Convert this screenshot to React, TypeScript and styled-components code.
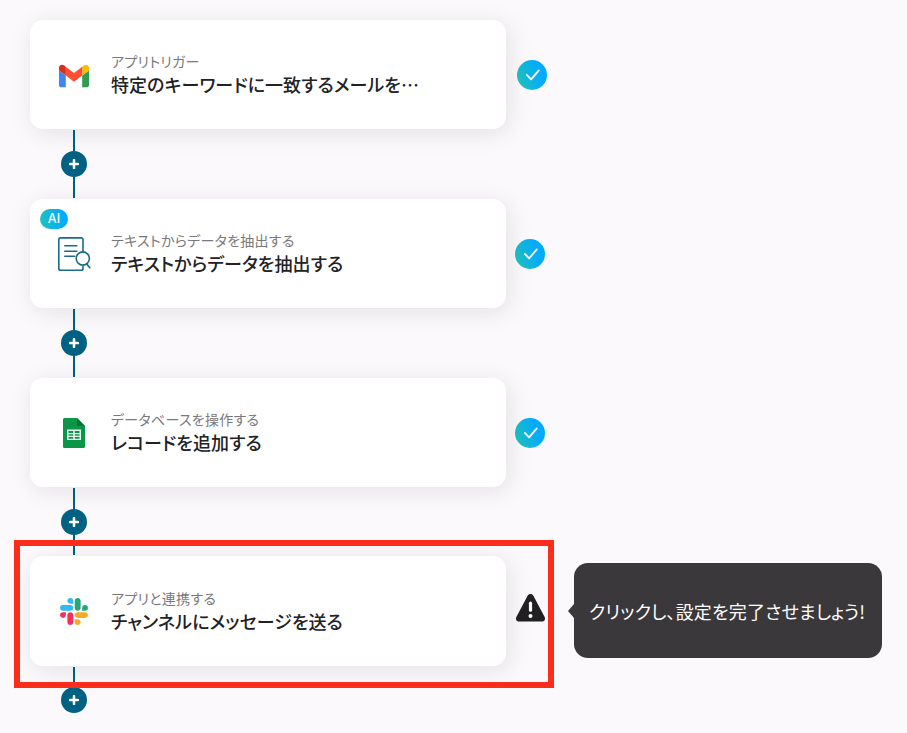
import React, { FC, ReactNode } from 'react';
import styled, { createGlobalStyle } from 'styled-components';

type Status = 'done' | 'warning';

interface FlowStep {
  id: string;
  icon: ReactNode;
  label: string;
  title: string;
  status: Status;
  statusGap: number;
  cardHeight: number;
  connectorHeight: number;
  isAi?: boolean;
  isHighlighted?: boolean;
  hint?: string;
}

const GmailIcon: FC = () => (
  <svg width="30" height="25" viewBox="52 37 88 73.300">
    <path fill="#4285f4" d="M58 108h14V74L52 59v43c0 3.320 2.690 6 6 6" />
    <path fill="#2f9a50" d="M120 108h14c3.320 0 6-2.690 6-6V59l-20 15" />
    <path fill="#fbbc04" d="M120 48v26l20-15v-8c0-7.420-8.470-11.650-14.400-7.200" />
    <path fill="#ff5035" d="M72 74V48l24 18 24-18v26L96 92" />
    <path fill="#d5301f" d="M52 51v8l20 15V48l-5.600-4.200c-5.940-4.450-14.400-.220-14.400 7.200" />
  </svg>
);

const DocumentSearchIcon: FC = () => (
  <svg
    width="34"
    height="36"
    viewBox="-.8 -.5 34 36"
    fill="none"
    stroke="#1b6c88"
    strokeWidth="1.600"
    strokeLinecap="round"
  >
    <path d="M25.200 15.500V3.200a1.800 1.800 0 0 0-1.800-1.800H2.800A1.800 1.800 0 0 0 1 3.200v28.800a1.800 1.800 0 0 0 1.800 1.800h20.600a1.800 1.800 0 0 0 1.800-1.800v-2" />
    <path d="M7 9.300h12M7 14.700h12M7 19.700h10" />
    <circle cx="25" cy="22" r="6.600" />
    <path d="M29 27.500l3 3.800" />
  </svg>
);

const SheetsIcon: FC = () => (
  <svg width="22" height="30" viewBox="0 0 22 30">
    <path fill="#0a9648" d="M1.500 0H14l8 8v20.500a1.500 1.500 0 0 1-1.500 1.500h-19A1.500 1.500 0 0 1 0 28.500v-27A1.500 1.500 0 0 1 1.500 0z" />
    <path fill="#087431" d="M14 0l8 8h-6.500A1.500 1.500 0 0 1 14 6.500z" />
    <path
      fill="#e6f5ec"
      fillRule="evenodd"
      d="M4 11.500h14v10.500H4zM5.500 13v2h4.700V13zm6.300 0v2h4.700V13zM5.500 16.200v1.500h4.700v-1.500zm6.300 0v1.500h4.700v-1.500zM5.500 18.900v1.800h4.700v-1.800zm6.300 0v1.800h4.700v-1.800z"
    />
  </svg>
);

const SlackIcon: FC = () => (
  <svg width="28" height="27" viewBox="0 0 122.800 122.800" preserveAspectRatio="none">
    <path
      fill="#f5305f"
      d="M25.800 77.600c0 7.100-5.800 12.900-12.900 12.900S0 84.700 0 77.600s5.800-12.900 12.900-12.900h12.900v12.900zM32.300 77.600c0-7.100 5.800-12.900 12.900-12.900s12.900 5.800 12.900 12.900v32.300c0 7.100-5.800 12.900-12.900 12.900s-12.900-5.800-12.900-12.900V77.600z"
    />
    <path
      fill="#31b9f5"
      d="M45.200 25.800c-7.100 0-12.900-5.800-12.900-12.900S38.100 0 45.200 0s12.900 5.800 12.900 12.900v12.900H45.200zM45.200 32.300c7.100 0 12.900 5.800 12.900 12.900s-5.800 12.900-12.900 12.900H12.900C5.800 58.100 0 52.300 0 45.200s5.800-12.900 12.900-12.900h32.300z"
    />
    <path
      fill="#25a77b"
      d="M97 45.200c0-7.100 5.800-12.900 12.900-12.900s12.900 5.800 12.900 12.900-5.800 12.900-12.900 12.900H97V45.200zM90.500 45.200c0 7.100-5.800 12.900-12.900 12.900s-12.900-5.800-12.900-12.900V12.900C64.700 5.800 70.500 0 77.600 0s12.900 5.800 12.900 12.900v32.300z"
    />
    <path
      fill="#f3ab23"
      d="M77.600 97c7.100 0 12.900 5.800 12.900 12.900s-5.800 12.900-12.900 12.900-12.900-5.800-12.900-12.900V97h12.900zM77.600 90.500c-7.100 0-12.900-5.800-12.900-12.900s5.800-12.900 12.900-12.900h32.300c7.100 0 12.900 5.800 12.900 12.900s-5.800 12.900-12.900 12.900H77.600z"
    />
  </svg>
);

const CheckIcon: FC = () => (
  <svg width="30" height="30" viewBox="0 0 30 30" fill="none">
    <path
      d="M9.800 14.900l4.300 4.500 7.700-9"
      stroke="#fff"
      strokeWidth="1.800"
      strokeLinecap="round"
      strokeLinejoin="round"
    />
  </svg>
);

const WarningIcon: FC = () => (
  <svg width="30" height="28" viewBox="-.5 1.300 30 28" overflow="visible">
    <path
      fill="#212023"
      d="M12.100 2c1.300-2.200 4.500-2.200 5.800 0l11.100 21c1.300 2.300.1 4.800-2.400 4.800H3.400C.9 27.800-.3 25.300 1 23z"
    />
    <path d="M15 9.500v7" stroke="#fff" strokeWidth="3.200" strokeLinecap="round" />
    <circle cx="15" cy="22.300" r="2" fill="#fff" />
  </svg>
);

const PlusIcon: FC = () => (
  <svg width="10" height="10" viewBox="0 0 10 10">
    <path d="M5 1.100v7.800M1.100 5h7.800" stroke="#fff" strokeWidth="2.500" strokeLinecap="round" />
  </svg>
);

const steps: FlowStep[] = [
  {
    id: 'gmail',
    icon: <GmailIcon />,
    label: 'アプリトリガー',
    title: '特定のキーワードに一致するメールを…',
    status: 'done',
    statusGap: 11,
    cardHeight: 109,
    connectorHeight: 70
  },
  {
    id: 'extract',
    icon: <DocumentSearchIcon />,
    label: 'テキストからデータを抽出する',
    title: 'テキストからデータを抽出する',
    status: 'done',
    statusGap: 9,
    cardHeight: 109,
    connectorHeight: 70,
    isAi: true
  },
  {
    id: 'sheets',
    icon: <SheetsIcon />,
    label: 'データベースを操作する',
    title: 'レコードを追加する',
    status: 'done',
    statusGap: 9,
    cardHeight: 109,
    connectorHeight: 69
  },
  {
    id: 'slack',
    icon: <SlackIcon />,
    label: 'アプリと連携する',
    title: 'チャンネルにメッセージを送る',
    status: 'warning',
    statusGap: 9,
    cardHeight: 110,
    connectorHeight: 68,
    isHighlighted: true,
    hint: 'クリックし、設定を完了させましょう!'
  }
];

const App: FC = () => (
  <>
    <GlobalStyle />
    <Flow>
      {steps.map((step, index) => (
        <React.Fragment key={step.id}>
          <StepRow>
            <Card height={step.cardHeight}>
              {step.isAi && <AiBadge>AI</AiBadge>}
              <IconBox>{step.icon}</IconBox>
              <Texts>
                <Label>{step.label}</Label>
                <Title>{step.title}</Title>
              </Texts>
            </Card>
            <StatusMark status={step.status} gap={step.statusGap}>
              {step.status === 'done' ? <CheckIcon /> : <WarningIcon />}
            </StatusMark>
            {step.hint && <Hint>{step.hint}</Hint>}
            {step.isHighlighted && <Highlight />}
          </StepRow>
          <Connector height={step.connectorHeight}>
            <Line />
            <AddButton aria-label="追加">
              <PlusIcon />
            </AddButton>
            <Line isHidden={index === steps.length - 1} />
          </Connector>
        </React.Fragment>
      ))}
    </Flow>
  </>
);

export default App;

const GlobalStyle = createGlobalStyle`
  * {
    box-sizing: border-box;
  }

  body {
    margin: 0;
    overflow: hidden;
    background: #fbf9fc;
    font-family: 'Noto Sans CJK JP', sans-serif;
    font-feature-settings: 'palt';
  }
`;

const Flow = styled('main')`
  display: flex;
  flex-direction: column;
  width: 907px;
  height: 733px;
  padding: 20px 0 0 30px;
`;

const StepRow = styled('section')`
  position: relative;
  display: flex;
  flex-shrink: 0;
  align-items: center;
`;

const Card = styled('div').withConfig({
  shouldForwardProp: prop => prop !== 'height'
})<{ height: number }>`
  position: relative;
  display: flex;
  align-items: center;
  width: 476px;
  height: ${({ height }) => height}px;
  border-radius: 13px;
  background: #fff;
  box-shadow: 3px 4px 24px rgba(30, 20, 30, 0.1);
`;

const AiBadge = styled('span')`
  position: absolute;
  top: 10px;
  left: 10px;
  width: 28px;
  height: 20px;
  border-radius: 10px;
  background: linear-gradient(80deg, #1fc3bd, #04abfa 80%);
  color: #fff;
  font: 500 12.5px/20px Inter, sans-serif;
  letter-spacing: 0.2px;
  text-align: center;
`;

const IconBox = styled('div')`
  display: flex;
  flex-shrink: 0;
  align-items: center;
  justify-content: center;
  width: 88px;
  padding-top: 1px;
`;

const Texts = styled('div')`
  display: flex;
  flex-direction: column;
  margin-left: -7px;
  padding-bottom: 1px;
  white-space: nowrap;
`;

const Label = styled('span')`
  color: #79787b;
  font-size: 14px;
  letter-spacing: 0.28px;
  line-height: 20px;
`;

const Title = styled('span')`
  color: #222124;
  font-size: 18px;
  font-weight: 500;
  letter-spacing: 0.08px;
  line-height: 26px;
`;

const StatusMark = styled('div').withConfig({
  shouldForwardProp: prop => prop !== 'status' && prop !== 'gap'
})<{ status: Status; gap: number }>`
  display: flex;
  width: 30px;
  height: 30px;
  margin-left: ${({ gap }) => gap}px;
  margin-bottom: ${({ status }) => (status === 'warning' ? 2 : 0)}px;
  border-radius: 50%;
  background: ${({ status }) =>
    status === 'done' ? 'linear-gradient(70deg, #25c6b6, #04abfa 68%)' : 'none'};
`;

const Hint = styled('div')`
  position: relative;
  display: flex;
  align-items: center;
  width: 308px;
  height: 95px;
  margin: 0 0 1px 29px;
  padding: 1px 0 0 15px;
  border-radius: 14px;
  background: #3a383b;
  color: #fff;
  font-size: 18px;
  letter-spacing: 0.2px;
  white-space: nowrap;

  &::before {
    content: '';
    position: absolute;
    top: 41px;
    left: -6px;
    border: solid transparent;
    border-width: 7px 6px 7px 0;
    border-right-color: #3a383b;
  }
`;

const Highlight = styled('div')`
  position: absolute;
  z-index: 1;
  top: -16px;
  left: -16px;
  width: 540px;
  height: 148px;
  border: 6px solid #fc2d1b;
  pointer-events: none;
`;

const Connector = styled('div').withConfig({
  shouldForwardProp: prop => prop !== 'height'
})<{ height: number }>`
  display: flex;
  flex-direction: column;
  flex-shrink: 0;
  align-items: center;
  width: 88px;
  height: ${({ height }) => height}px;
  padding: 1px 0;
`;

const Line = styled('div').withConfig({
  shouldForwardProp: prop => prop !== 'isHidden'
})<{ isHidden?: boolean }>`
  flex: 1;
  width: 2px;
  background: #006182;
  visibility: ${({ isHidden }) => (isHidden ? 'hidden' : 'visible')};
`;

const AddButton = styled('button')`
  display: flex;
  align-items: center;
  justify-content: center;
  width: 26px;
  height: 26px;
  padding: 0;
  border: 0;
  border-radius: 50%;
  background: #006182;
`;
